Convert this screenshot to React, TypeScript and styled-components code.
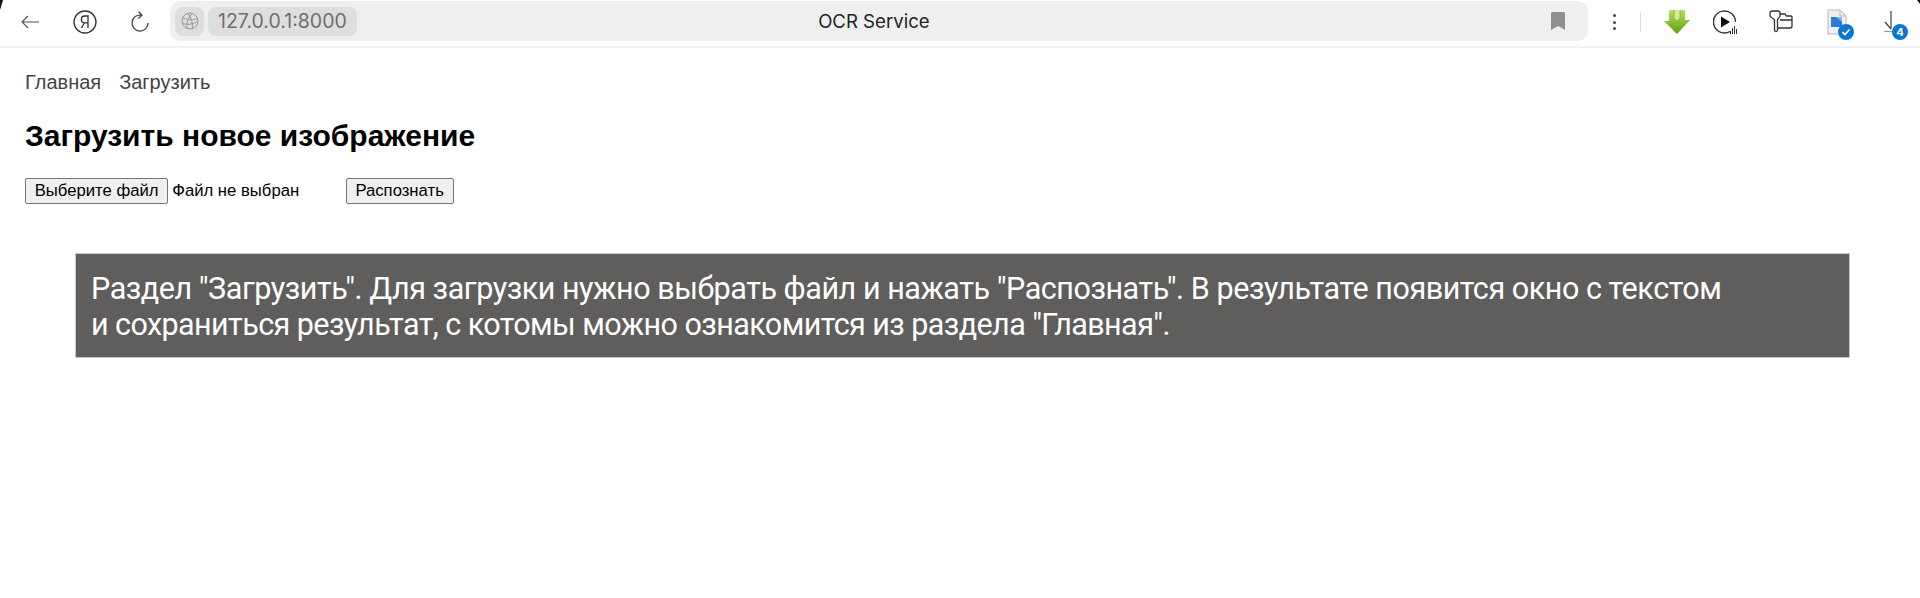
import React from "react";
import styled, { createGlobalStyle } from "styled-components";

const GlobalStyle = createGlobalStyle`
  html, body {
    margin: 0;
    padding: 0;
    background: #fff;
    font-family: "Liberation Sans", Arial, sans-serif;
  }
`;

const App: React.FC = () => {
  return (
    <>
      <GlobalStyle />
      <Page>
        <Toolbar>
          <NavIcons>
            <IconSlot>
              <svg width="24" height="24" viewBox="0 0 24 24" fill="none" stroke="#555" strokeWidth="1.1">
                <path d="M21 12H4M10 6l-6 6 6 6" />
              </svg>
            </IconSlot>
            <IconSlot>
              <svg width="26" height="26" viewBox="0 0 26 26" fill="none" stroke="#333" strokeWidth="1.3">
                <circle cx="13" cy="13" r="11" />
                <path d="M16 19V7h-3.2a3.4 3.4 0 0 0 0 6.8H16M12.5 13.8 9.5 19" />
              </svg>
            </IconSlot>
            <IconSlot>
              <svg width="24" height="24" viewBox="0 0 24 24" fill="none" stroke="#444" strokeWidth="1.3">
                <path d="M13.5 5.2A8 8 0 1 0 20 13M10.5 1.5l3.5 3.7-3.7 3.3" />
              </svg>
            </IconSlot>
          </NavIcons>
          <AddressBar>
            <GlobeChip>
              <svg width="20" height="20" viewBox="0 0 20 20" fill="none" stroke="#999" strokeWidth="1">
                <circle cx="10" cy="10" r="8" />
                <path d="M3 6.5c5 3 10 3 14.5 1M2.5 12.5c5 1.5 10 1 15-2M12.5 2.5C8 6 6 12 7 17.5M8 2.5c3 4 5 9 4.5 15" />
              </svg>
            </GlobeChip>
            <UrlChip>127.0.0.1:8000</UrlChip>
            <PageTitle>OCR Service</PageTitle>
            <svg width="14" height="18" viewBox="0 0 14 18" fill="#8f8f8f">
              <path d="M0 1.5A1.5 1.5 0 0 1 1.5 0h11A1.5 1.5 0 0 1 14 1.5V18l-7-4-7 4z" />
            </svg>
          </AddressBar>
          <MenuDots>
            <Dot />
            <Dot />
            <Dot />
          </MenuDots>
          <Divider />
          <ExtensionIcons>
            <IconSlot>
              <svg width="26" height="25" viewBox="0 0 26 25">
                <defs>
                  <linearGradient id="saveGreen" x1="0" y1="0" x2="0" y2="1">
                    <stop offset="0" stopColor="#b9dd62" />
                    <stop offset="1" stopColor="#5f9f0c" />
                  </linearGradient>
                </defs>
                <path d="M5 0h16v10h5L13 24 0 11h5z" fill="url(#saveGreen)" />
                <path d="M10 0h6v8l-3 3-3-3z" fill="#d4eb9a" />
                <path d="M10 0v8l3 3 3-3V0" fill="none" stroke="#7db52a" strokeWidth="0.8" />
              </svg>
            </IconSlot>
            <IconSlot>
              <svg width="25" height="25" viewBox="0 0 25 25" fill="none">
                <path d="M17 21.5A11 11 0 1 1 22.5 12" stroke="#333" strokeWidth="1.4" />
                <path d="M8 6.5l9 5.5-9 5.5z" fill="#111" />
                <path d="M17.5 24v-3M19.5 24v-6M21.5 24v-8M23.5 24v-5" stroke="#333" strokeWidth="1" />
              </svg>
            </IconSlot>
            <IconSlot>
              <svg width="24" height="24" viewBox="0 0 24 24" fill="none" stroke="#333" strokeWidth="1.3">
                <path d="M1 3c0-1.3 1-2 2-2h6c1 0 2 .7 2 2v3c0 1.5-2.5 2.5-2.5 4v10c0 2-3 2-3 0V10C5.5 8.5 1 7.5 1 6z" />
                <path d="M11 4h5l1.5 2H22a1 1 0 0 1 1 1v9a2 2 0 0 1-2 2H9M11 10h12" />
              </svg>
            </IconSlot>
            <BadgedIcon>
              <svg width="20" height="26" viewBox="0 0 20 26" fill="none">
                <path d="M1 1h12l6 6v18H1z" fill="#f0f0f3" stroke="#b5b5bd" />
                <path d="M13 1v6h6" stroke="#b5b5bd" />
                <rect x="4" y="8" width="11" height="10" fill="#2f79d9" />
                <path d="M9 8h6v5z" fill="#7fb3ef" />
              </svg>
              <Badge $right={6.5}>
                <svg width="10" height="10" viewBox="0 0 10 10" fill="none" stroke="#fff" strokeWidth="1.6">
                  <path d="M1.5 5.2 4 7.5l4.5-5" />
                </svg>
              </Badge>
            </BadgedIcon>
            <BadgedIcon>
              <svg width="16" height="22" viewBox="0 0 16 22" fill="none" stroke="#444" strokeWidth="1.2">
                <path d="M8 0v18M2 11l6 7" />
                <path d="M1 20.5h14" stroke="#999" />
              </svg>
              <Badge $right={14}>4</Badge>
            </BadgedIcon>
          </ExtensionIcons>
        </Toolbar>

        <Content>
          <TopNav>
            <NavLink>Главная</NavLink>
            <NavLink>Загрузить</NavLink>
          </TopNav>
          <Heading>Загрузить новое изображение</Heading>
          <UploadForm>
            <FormButton type="button">Выберите файл</FormButton>
            <FileName>Файл не выбран</FileName>
            <FormButton type="button">Распознать</FormButton>
          </UploadForm>
          <Caption>
            <CaptionLine $tracking={-0.45}>
              Раздел "Загрузить". Для загрузки нужно выбрать файл и нажать "Распознать". В результате появится окно с текстом
            </CaptionLine>
            <CaptionLine $tracking={-0.57}>
              и сохраниться результат, с котомы можно ознакомится из раздела "Главная".
            </CaptionLine>
          </Caption>
        </Content>
      </Page>
    </>
  );
};

const Page = styled.div`
  width: 1920px;
  height: 598px;
  overflow: hidden;
  background: #fff;
`;

const Toolbar = styled.header`
  position: relative;
  height: 48px;
  padding-bottom: 2px;
  box-sizing: border-box;
  display: flex;
  align-items: center;
  border-bottom: 2px solid #f1f1f1;
  font-family: "Inter", sans-serif;

  &::before {
    content: "";
    position: absolute;
    top: 0;
    left: 0;
    width: 3px;
    height: 10px;
    background: #111;
    clip-path: polygon(0 0, 100% 0, 0 100%);
  }

  &::after {
    content: "";
    position: absolute;
    top: 0;
    right: 0;
    width: 3px;
    height: 4px;
    background: #111;
    clip-path: polygon(0 0, 100% 0, 100% 100%);
  }
`;

const NavIcons = styled.div`
  flex-shrink: 0;
  display: flex;
  align-items: center;
  gap: 18px;
  padding-left: 11px;
  width: 170px;
  box-sizing: border-box;
`;

const IconSlot = styled.div`
  height: 37px;
  min-width: 37px;
  display: flex;
  align-items: center;
  justify-content: center;
`;

const AddressBar = styled.div`
  flex-shrink: 0;
  width: 1418px;
  height: 40px;
  align-self: flex-start;
  margin-top: 1px;
  padding: 0 23px 0 5px;
  box-sizing: border-box;
  display: flex;
  align-items: center;
  gap: 4px;
  background: #efefef;
  border-radius: 10px;
`;

const GlobeChip = styled.div`
  width: 29px;
  height: 29px;
  display: flex;
  align-items: center;
  justify-content: center;
  background: #dedede;
  border-radius: 8px;
`;

const UrlChip = styled.div`
  height: 29px;
  padding: 0 10px;
  display: flex;
  align-items: center;
  background: #dedede;
  border-radius: 8px;
  color: #6e6e6e;
  font-size: 19.5px;
`;

const PageTitle = styled.div`
  flex: 1;
  padding-right: 160px;
  text-align: center;
  font-size: 18.6px;
  color: #222;
`;

const MenuDots = styled.div`
  flex-shrink: 0;
  margin-left: 25px;
  display: flex;
  flex-direction: column;
  gap: 3.5px;
`;

const Dot = styled.span`
  width: 3px;
  height: 3px;
  background: #444;
  border-radius: 50%;
`;

const Divider = styled.div`
  flex-shrink: 0;
  width: 1px;
  height: 20px;
  margin-left: 24px;
  background: #dcdcdc;
`;

const ExtensionIcons = styled.div`
  flex-shrink: 0;
  display: grid;
  grid-template-columns: 51px 47px 64px 47px 62px;
  margin-left: 10px;
`;

const BadgedIcon = styled(IconSlot)`
  position: relative;
`;

const Badge = styled.span<{ $right: number }>`
  position: absolute;
  right: ${({ $right }) => $right}px;
  bottom: 1px;
  width: 16px;
  height: 16px;
  display: flex;
  align-items: center;
  justify-content: center;
  background: #0a77d5;
  border-radius: 50%;
  color: #fff;
  font-size: 11px;
  font-weight: 700;
`;

const Content = styled.main`
  padding: 0 25px;
`;

const TopNav = styled.nav`
  display: flex;
  gap: 18px;
  padding-top: 23px;
`;

const NavLink = styled.a`
  font-size: 20px;
  line-height: 23px;
  color: #444;
`;

const Heading = styled.h1`
  margin: 25px 0 0;
  font-size: 30px;
  line-height: 34px;
  font-weight: 700;
  color: #000;
`;

const UploadForm = styled.form`
  display: flex;
  align-items: center;
  margin-top: 25px;
`;

const FormButton = styled.button`
  height: 26px;
  padding: 0 8.7px;
  font-family: "Liberation Sans", Arial, sans-serif;
  font-size: 16.7px;
  color: #000;
  background: #efefef;
  border: 1px solid #767676;
  border-radius: 2px;
`;

const FileName = styled.span`
  width: 177.5px;
  padding-left: 4px;
  box-sizing: border-box;
  font-size: 16.7px;
  color: #000;
`;

const Caption = styled.div`
  width: 1775px;
  height: 105px;
  margin: 49px 0 0 50px;
  padding: 17px 15px;
  box-sizing: border-box;
  background: #5f5e5c;
  border: 1px solid #c9c9c9;
  color: #fff;
  font-family: "Roboto", sans-serif;
  font-size: 30.5px;
  line-height: 36px;
  white-space: nowrap;
`;

const CaptionLine = styled.div<{ $tracking: number }>`
  letter-spacing: ${({ $tracking }) => $tracking}px;
`;

export default App;
